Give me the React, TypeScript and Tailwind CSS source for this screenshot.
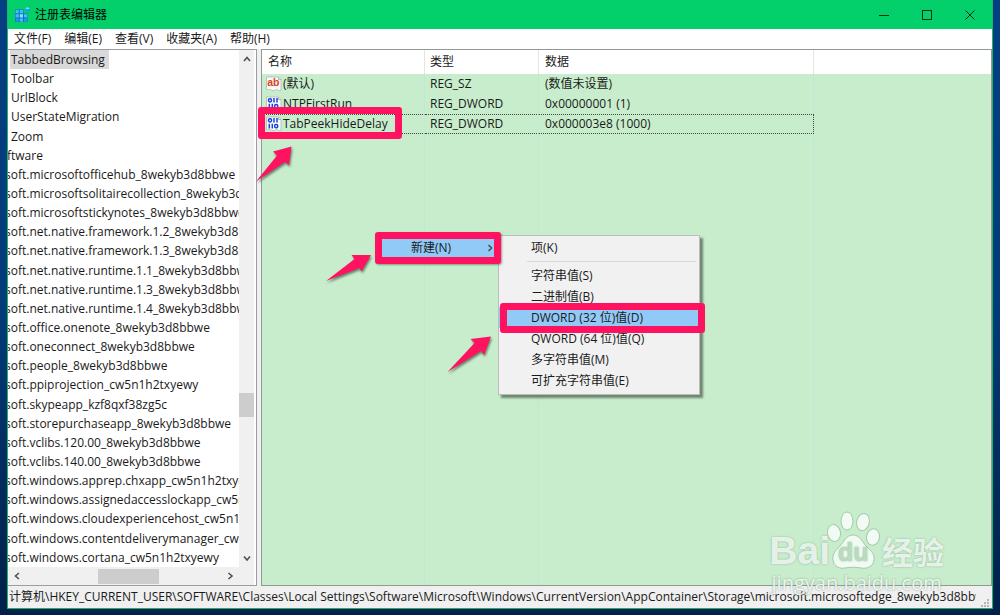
import React from "react";

const menus = ["文件(F)", "编辑(E)", "查看(V)", "收藏夹(A)", "帮助(H)"];

const topKeys = ["TabbedBrowsing", "Toolbar", "UrlBlock", "UserStateMigration", "Zoom"];

const deepKeys = [
  "soft.microsoftofficehub_8wekyb3d8bbwe",
  "soft.microsoftsolitairecollection_8wekyb3d8bbwe",
  "soft.microsoftstickynotes_8wekyb3d8bbwe",
  "soft.net.native.framework.1.2_8wekyb3d8bbwe",
  "soft.net.native.framework.1.3_8wekyb3d8bbwe",
  "soft.net.native.runtime.1.1_8wekyb3d8bbwe",
  "soft.net.native.runtime.1.3_8wekyb3d8bbwe",
  "soft.net.native.runtime.1.4_8wekyb3d8bbwe",
  "soft.office.onenote_8wekyb3d8bbwe",
  "soft.oneconnect_8wekyb3d8bbwe",
  "soft.people_8wekyb3d8bbwe",
  "soft.ppiprojection_cw5n1h2txyewy",
  "soft.skypeapp_kzf8qxf38zg5c",
  "soft.storepurchaseapp_8wekyb3d8bbwe",
  "soft.vclibs.120.00_8wekyb3d8bbwe",
  "soft.vclibs.140.00_8wekyb3d8bbwe",
  "soft.windows.apprep.chxapp_cw5n1h2txyewy",
  "soft.windows.assignedaccesslockapp_cw5n1h2txyewy",
  "soft.windows.cloudexperiencehost_cw5n1h2txyewy",
  "soft.windows.contentdeliverymanager_cw5n1h2txyewy",
  "soft.windows.cortana_cw5n1h2txyewy",
];

const rows = [
  { kind: "ab", name: "(默认)", type: "REG_SZ", data: "(数值未设置)" },
  { kind: "bin", name: "NTPFirstRun", type: "REG_DWORD", data: "0x00000001 (1)" },
  { kind: "bin", name: "TabPeekHideDelay", type: "REG_DWORD", data: "0x000003e8 (1000)" },
];

const newItems = [
  "字符串值(S)",
  "二进制值(B)",
  "DWORD (32 位)值(D)",
  "QWORD (64 位)值(Q)",
  "多字符串值(M)",
  "可扩充字符串值(E)",
];

function RegeditIcon() {
  return (
    <svg className="h-4 w-4 shrink-0" viewBox="0 0 16 16" aria-hidden="true">
      <rect x="1" y="2.500" width="12.500" height="12.500" fill="#0a6fc0" />
      <g fill="#3fc0f5">
        <rect x="1.500" y="3" width="3.300" height="3.300" />
        <rect x="5.700" y="3" width="3.300" height="3.300" />
        <rect x="1.500" y="7.200" width="3.300" height="3.300" />
        <rect x="5.700" y="7.200" width="3.300" height="3.300" fill="#7fe0ff" />
        <rect x="9.900" y="7.200" width="3.300" height="3.300" />
        <rect x="1.500" y="11.400" width="3.300" height="3.300" fill="#1f9be0" />
        <rect x="5.700" y="11.400" width="3.300" height="3.300" />
        <rect x="9.900" y="11.400" width="3.300" height="3.300" fill="#1f9be0" />
      </g>
      <path d="M9.500 2h4.200v4.600H9.500z" fill="#03cf6b" />
      <path d="M13.500.2 15.800 1.300v2.500l-2.300 1.100-2.300-1.100V1.300z" fill="#1d9fe6" />
      <path d="M13.500.2 15.800 1.300l-2.300 1-2.300-1z" fill="#86e2ff" />
    </svg>
  );
}

function ValueIcon({ kind }: { kind: string }) {
  return (
    <svg className="h-4 w-4 shrink-0" viewBox="0 0 16 16" aria-hidden="true">
      <path
        d="M.5 1h12l2.500 2.500v11c-1.500.8-2.500 0-3.500-.8-1.500-1-2.500 1.300-4.500 1-2-.3-2.500-1.700-4.500-1.200-1 .2-1.500.5-2 0z"
        fill="#fafafa"
        stroke="#b0b6b0"
        strokeWidth=".8"
      />
      <path d="M12.500 1v2.500h2.500" fill="#dfe3df" stroke="#a0a6a0" strokeWidth=".7" />
      {kind === "ab" ? (
        <text x="1.200" y="10" fontSize="10.500" fontWeight="700" fill="#d9431c" fontFamily="Liberation Sans, sans-serif">
          ab
        </text>
      ) : (
        <g fill="none" stroke="#1a45dc" strokeWidth="1.500">
          <rect x="2.500" y="2.700" width="3" height="3.200" rx="1.300" />
          <path d="M8 2v4.600M11 2v4.600M3.300 7.800v4.600M6.300 7.800v4.600" />
          <rect x="8.700" y="8.500" width="3" height="3.200" rx="1.300" />
        </g>
      )}
    </svg>
  );
}

function Chevron({ className, d }: { className?: string; d: string }) {
  return (
    <svg className={"h-2 w-2 " + (className ?? "")} viewBox="0 0 8 8" fill="none" stroke="#505050" strokeWidth="1.600" aria-hidden="true">
      <path d={d} />
    </svg>
  );
}

function Arrows() {
  return (
    <svg
      className="pointer-events-none absolute left-0 top-0 h-[400px] w-[520px] drop-shadow-[1px_2px_1px_rgba(40,60,40,0.6)]"
      viewBox="0 0 520 400"
      fill="#ff1361"
      aria-hidden="true"
    >
      <path d="M256 181.500 277 155.500 273 151.500 291.500 146.500 289 165 285 162z" />
      <path d="M326 281 354.500 259 351.500 255 371 255 361.500 271.500 359.500 268z" />
      <path d="M447.500 372 474.500 343 470.500 339 491 336.500 484 355 481 351z" />
    </svg>
  );
}

function Watermark() {
  return (
    <div className="pointer-events-none absolute bottom-[18px] right-[56px] flex flex-col text-white/80">
      <div className="flex h-[58px] items-end [text-shadow:0_0_2px_rgba(90,150,105,0.7)]">
        <span className="font-['Liberation_Sans',sans-serif] text-[39px] font-bold leading-9">Bai</span>
        <span className="relative block h-[58px] w-[52px]">
          <svg className="h-full w-full overflow-visible" viewBox="0 0 52 58" aria-hidden="true">
            <g fill="#fff" fillOpacity=".75" stroke="#a3c9aa" strokeWidth="1">
              <ellipse cx="4" cy="22" rx="6.500" ry="8.500" transform="rotate(-10 4 22)" />
              <ellipse cx="17" cy="10" rx="6" ry="9" />
              <ellipse cx="33" cy="11" rx="6.300" ry="8.700" transform="rotate(12 33 11)" />
              <ellipse cx="43" cy="26" rx="6.500" ry="8.300" transform="rotate(8 43 26)" />
              <path d="M23 24c-7 0-9 7-13 11-4 4-8 8-7 14 1 7 7 9 12 8 6-1 10-1 16 0 6 1 12-1 13-8 1-6-3-9-7-13-5-5-7-12-14-12z" />
            </g>
          </svg>
          <span className="absolute bottom-[3px] left-2 font-['Liberation_Sans',sans-serif] text-[25px] font-bold leading-7 text-[#b9dcbf]">
            du
          </span>
        </span>
        <span className="font-['Noto_Sans_CJK_SC',sans-serif] text-[31px] font-bold leading-9">经验</span>
      </div>
      <span className="self-center whitespace-nowrap font-['Open_Sans',sans-serif] text-[20px] leading-7 text-white/85 [text-shadow:0_0_2px_rgba(90,130,100,0.8)]">
        jingyan.baidu.com
      </span>
    </div>
  );
}

export default function App() {
  return (
    <div className="relative flex h-screen overflow-hidden bg-linear-to-b from-[#053e82] via-[#043a78] to-[#02204a] px-[7px] pb-[6px] font-['Open_Sans','Noto_Sans_CJK_SC',sans-serif] text-[12px] text-[#1a1a1a]">
      <div className="flex min-w-0 flex-1 flex-col border border-t-0 border-[#12b867] bg-[#f0f0f0]">
        <header className="flex h-[29px] shrink-0 items-center bg-[#03cf6b] pl-[6px] pr-px">
          <RegeditIcon />
          <h1 className="ml-[5px] flex-1 font-normal text-black">注册表编辑器</h1>
          <button aria-label="最小化" className="flex h-full w-[43px] items-center justify-center">
            <svg className="h-[10px] w-[10px]" viewBox="0 0 10 10" stroke="#05301b" aria-hidden="true">
              <path d="M0 5.500h10" />
            </svg>
          </button>
          <button aria-label="最大化" className="flex h-full w-[43px] items-center justify-center">
            <svg className="h-[10px] w-[10px]" viewBox="0 0 10 10" fill="none" stroke="#05301b" aria-hidden="true">
              <rect x=".5" y=".5" width="9" height="9" />
            </svg>
          </button>
          <button aria-label="关闭" className="flex h-full w-[43px] items-center justify-center">
            <svg className="h-[10px] w-[10px]" viewBox="0 0 10 10" stroke="#05301b" aria-hidden="true">
              <path d="M.5.5l9 9M9.500.5l-9 9" />
            </svg>
          </button>
        </header>

        <nav className="flex h-5 shrink-0 items-center gap-[13px] bg-white pl-[6px]">
          {menus.map((m) => (
            <button key={m} className="whitespace-nowrap leading-5">
              {m}
            </button>
          ))}
        </nav>

        <div className="flex min-h-0 flex-1 gap-1">
          <aside className="flex w-[249px] shrink-0 flex-col border border-l-0 border-[#9a9da3] bg-white pr-[2px]">
            <div className="flex min-h-0 flex-1">
              <ul className="flex min-w-0 flex-1 flex-col overflow-hidden whitespace-nowrap">
                {topKeys.map((k, i) => (
                  <li key={k} className="flex min-h-0 flex-1 items-center pl-[2px]">
                    <span className={i === 0 ? "bg-[#d9d9d9] pl-px pr-1 leading-[19px]" : "pl-px leading-[19px]"}>{k}</span>
                  </li>
                ))}
                <li className="-ml-px flex min-h-0 flex-1 items-center leading-[19px]">ftware</li>
                {deepKeys.map((k) => (
                  <li key={k} className="-ml-[3px] flex min-h-0 flex-1 items-center leading-[19px]">
                    {k}
                  </li>
                ))}
              </ul>
              <div className="flex w-[15px] shrink-0 flex-col items-center bg-[#f0f0f0]">
                <button aria-label="向上滚动" className="flex h-[18px] w-full items-center justify-center">
                  <Chevron d="M1 6l3-3.500L7 6" />
                </button>
                <div className="w-full flex-[325]" />
                <div className="h-6 w-full bg-[#cdcdcd]" />
                <div className="w-full flex-[132]" />
                <button aria-label="向下滚动" className="flex h-[18px] w-full items-center justify-center">
                  <Chevron d="M1 2.500l3 3.500L7 2.500" />
                </button>
              </div>
            </div>
            <div className="flex h-[18px] shrink-0 items-center bg-[#f0f0f0] pr-4">
              <button aria-label="向左滚动" className="flex h-full w-[17px] items-center justify-center">
                <Chevron d="M6 1L2.500 4 6 7" />
              </button>
              <div className="flex-[73]" />
              <div className="h-[15px] w-[61px] bg-[#cdcdcd]" />
              <div className="flex-[62]" />
              <button aria-label="向右滚动" className="flex h-full w-[17px] items-center justify-center">
                <Chevron d="M2.500 1L6 4 2.500 7" />
              </button>
            </div>
          </aside>

          <main className="min-w-0 flex-1 border border-[#8f9a93] bg-[#c8edcd]">
            <table className="h-full w-full table-fixed border-separate border-spacing-0 text-left">
              <colgroup>
                <col className="w-[163px]" />
                <col className="w-[114px]" />
                <col className="w-[275px]" />
                <col />
              </colgroup>
              <thead>
                <tr className="h-6 bg-white">
                  <th className="border-r border-[#e3e6e3] p-0 pl-[6px] font-normal">名称</th>
                  <th className="border-r border-[#e3e6e3] p-0 pl-[5px] font-normal">类型</th>
                  <th className="border-r border-[#e3e6e3] p-0 pl-[6px] font-normal">数据</th>
                  <th className="p-0" />
                </tr>
              </thead>
              <tbody>
                {rows.map((r, i) => {
                  const focus = i === 2 ? "border-y border-y-[#444] border-dotted " : "";
                  return (
                    <tr key={r.name} className="h-5">
                      <td className={focus + "border-r border-r-[#bfe8d6] p-0 pl-1"}>
                        <span className="flex h-[18px] items-center gap-px whitespace-nowrap">
                          <ValueIcon kind={r.kind} />
                          {r.name}
                        </span>
                      </td>
                      <td className={focus + "border-r border-r-[#bfe8d6] p-0 pl-[5px]"}>{r.type}</td>
                      <td className={focus + (i === 2 ? "border-r border-r-[#444] p-0 pl-[6px]" : "border-r border-r-[#bfe8d6] p-0 pl-[6px]")}>
                        {r.data}
                      </td>
                      <td className="p-0" />
                    </tr>
                  );
                })}
                <tr aria-hidden="true">
                  <td className="border-r border-[#bfe8d6] p-0" />
                  <td className="border-r border-[#bfe8d6] p-0" />
                  <td className="border-r border-[#bfe8d6] p-0" />
                  <td className="p-0" />
                </tr>
              </tbody>
            </table>
          </main>
        </div>

        <footer className="flex h-[22px] shrink-0 items-center pl-px pr-[2px]">
          <p className="mr-[5px] min-w-0 flex-1 overflow-hidden whitespace-nowrap leading-5">
            计算机\HKEY_CURRENT_USER\SOFTWARE\Classes\Local Settings\Software\Microsoft\Windows\CurrentVersion\AppContainer\Storage\microsoft.microsoftedge_8wekyb3d8bbwe
          </p>
          <svg className="h-[9px] w-[9px] self-end" viewBox="0 0 9 9" fill="#b5b5b5" aria-hidden="true">
            <path d="M6 0h2v2H6zM3 3h2v2H3zM6 3h2v2H6zM0 6h2v2H0zM3 6h2v2H3zM6 6h2v2H6z" />
          </svg>
        </footer>
      </div>

      <div role="menu" className="absolute left-[498px] top-[235px] w-[202px] border border-[#bdbdbd] bg-[#f1f1f1] pb-[3px] pt-px shadow-[3px_3px_2px_rgba(60,80,60,0.65)]">
        <button role="menuitem" className="block h-[21px] w-full pl-8 text-left">
          项(K)
        </button>
        <hr className="my-[3px] ml-7 mr-[3px] border-[#d7d7d7]" />
        {newItems.map((t, i) => (
          <button
            key={t}
            role="menuitem"
            className={i === 2 ? "block h-[21px] w-full bg-[#91c9f7] pl-8 text-left" : "block h-[21px] w-full pl-8 text-left"}
          >
            {t}
          </button>
        ))}
      </div>

      <button className="absolute left-[375px] top-[232px] flex h-8 w-[126px] items-center justify-between rounded-[3px] border-[7px] border-[#ff1361] bg-[#91c9f7] pl-[29px] shadow-[1px_1px_2px_rgba(60,80,60,0.5)]">
        新建(N)
        <Chevron className="shrink-0" d="M2.500 1L5.500 4 2.500 7" />
      </button>
      <div className="pointer-events-none absolute left-[258px] top-[107px] h-8 w-36 rounded-[3px] border-[7px] border-[#ff1361]" />
      <div className="pointer-events-none absolute left-[500px] top-[303px] h-[30px] w-[205px] rounded-[3px] border-[7px] border-[#ff1361]" />
      <Arrows />
      <Watermark />
    </div>
  );
}
